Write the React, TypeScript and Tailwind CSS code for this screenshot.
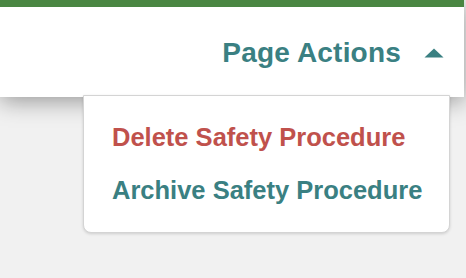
import { useState } from "react";

const actions = [
  { label: "Delete Safety Procedure", className: "text-[#c0514c]" },
  { label: "Archive Safety Procedure", className: "text-[#3a8082]" },
];

export default function App() {
  const [open, setOpen] = useState(true);

  return (
    <div className="min-h-screen bg-[#f1f1f1] pr-[2px] font-['Liberation_Sans',Arial,sans-serif]">
      <div className="relative z-10 bg-white shadow-[0_4px_22px_rgba(0,0,0,0.38)]">
        <div className="h-[7px] bg-[#4a8642]" />
        <div className="flex h-[90px] items-center justify-end pr-[20px]">
          <button
            className="flex items-center gap-[23px] font-bold text-[#3a8082]"
            onClick={() => setOpen(!open)}
          >
            <span className="mt-[1px] whitespace-nowrap text-[28px] leading-[32px] tracking-[0.2px]">Page Actions</span>
            <svg width="20" height="10" viewBox="0 0 20 10" className="mt-[2px]">
              <path d="M10 0.5 L19.5 9.5 L0.5 9.5 Z" fill="#3a8082" />
            </svg>
          </button>
        </div>

        {open && (
          <div className="absolute right-[14px] top-[95px] z-20 w-[367px] rounded-b-lg border border-[#d4d4d4] bg-white pl-[28px] pr-[10px] pt-[26px] pb-[27px] shadow-[0_1px_3px_rgba(0,0,0,0.15)]">
            <ul className="flex flex-col gap-[23px]">
              {actions.map((a) => (
                <li
                  key={a.label}
                  className={`whitespace-nowrap text-[25.5px] font-bold leading-[30px] ${a.className}`}
                >
                  {a.label}
                </li>
              ))}
            </ul>
          </div>
        )}
      </div>
    </div>
  );
}
